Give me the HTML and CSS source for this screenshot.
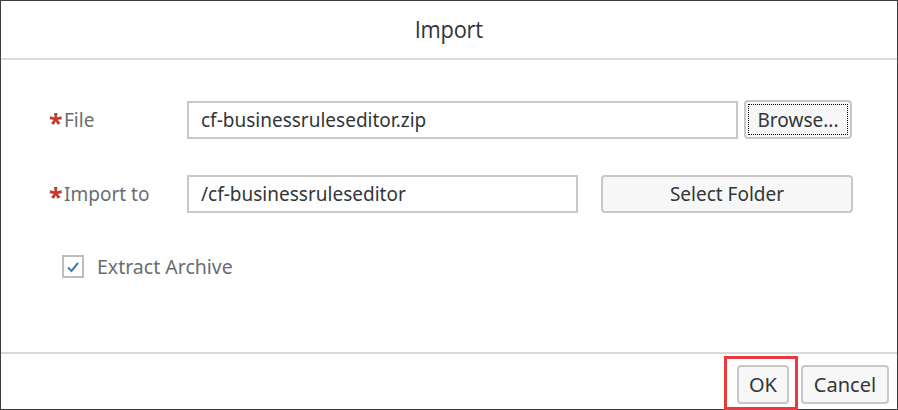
FILE: index.html
```html
<!DOCTYPE html>
<html lang="en">
<head>
<meta charset="utf-8">
<title>Import</title>
<link rel="stylesheet" href="styles.css">
</head>
<body>
<div class="dialog">
  <header class="dialog-header">
    <h1 class="title">Import</h1>
  </header>
  <main class="dialog-content">
    <div class="form-row">
      <label class="label"><span class="req">*</span>File</label>
      <div class="field field-file">cf-businessruleseditor.zip</div>
      <button class="btn btn-browse"><span class="focus-ring">Browse...</span></button>
    </div>
    <div class="form-row row-second">
      <label class="label"><span class="req">*</span>Import to</label>
      <div class="field field-folder">/cf-businessruleseditor</div>
      <button class="btn btn-folder">Select Folder</button>
    </div>
    <div class="check-row">
      <span class="checkbox">
        <svg width="14" height="12" viewBox="0 0 14 12"><path d="M2 6.5 L5.5 10 L12 2" fill="none" stroke="#427cac" stroke-width="2"/></svg>
      </span>
      <span class="check-label">Extract Archive</span>
    </div>
  </main>
  <footer class="dialog-footer">
    <div class="ok-wrap">
      <button class="btn btn-ok">OK</button>
      <span class="highlight"></span>
    </div>
    <button class="btn btn-cancel">Cancel</button>
  </footer>
</div>
</body>
</html>
```
FILE: styles.css
```css
* { box-sizing: border-box; }
html, body { margin: 0; padding: 0; background: #fff; }
body {
  font-family: "Noto Sans", "Open Sans", sans-serif;
  color: #32363a;
}
.dialog {
  width: 898px;
  height: 410px;
  border: 1px solid #3e3e3e;
  display: flex;
  flex-direction: column;
  background: #fff;
}
.dialog-header {
  height: 59px;
  border-bottom: 2px solid #dcdcdc;
  display: flex;
  align-items: center;
  justify-content: center;
  flex-shrink: 0;
}
.title {
  margin: 0;
  font-family: "Open Sans", sans-serif;
  font-weight: 400;
  font-size: 23px;
  letter-spacing: -0.3px;
  color: #32363a;
  transform: scaleX(0.95);
  padding-bottom: 2px;
}
.dialog-content {
  flex: 1;
  padding: 40px 0 0 48px;
  border-bottom: 2px solid #d9d9d9;
}
.form-row {
  display: flex;
  align-items: center;
  height: 39px;
}
.row-second { margin-top: 35px; }
.label {
  width: 138px;
  flex-shrink: 0;
  font-size: 19px;
  color: #6a6d70;
  display: flex;
  align-items: center;
}
.req {
  color: #c0392b;
  font-size: 25px;
  font-weight: 700;
  width: 15px;
  line-height: 1;
  margin-top: 5px;
}
.field {
  height: 38px;
  border: 2px solid #c8c8c8;
  font-size: 19px;
  color: #32363a;
  padding: 0 12px;
  display: flex;
  align-items: center;
}
.field-file { width: 551px; }
.field-folder { width: 391px; }
.btn {
  font-family: "Noto Sans", "Open Sans", sans-serif;
  font-size: 19px;
  color: #32363a;
  background: #f6f7f6;
  border: 2px solid #c8c8c8;
  border-radius: 4px;
  height: 39px;
  padding: 0;
  display: flex;
  align-items: center;
  justify-content: center;
}
.btn-browse {
  width: 108px;
  margin-left: 6px;
  padding: 2px;
}
.focus-ring {
  width: 100%;
  height: 100%;
  border: 1px dotted #000;
  display: flex;
  align-items: center;
  justify-content: center;
}
.btn-folder {
  width: 252px;
  margin-left: 23px;
  height: 38px;
}
.check-row {
  display: flex;
  align-items: center;
  margin-top: 40px;
  margin-left: 13px;
}
.checkbox {
  width: 22px;
  height: 23px;
  border: 2px solid #bdbdbd;
  display: flex;
  align-items: center;
  justify-content: center;
}
.check-label {
  margin-left: 13px;
  font-size: 19.5px;
  color: #6a6d70;
}
.dialog-footer {
  height: 55px;
  flex-shrink: 0;
  display: flex;
  justify-content: flex-end;
  align-items: flex-start;
  padding: 11px 8px 0 0;
  gap: 12px;
}
.ok-wrap { position: relative; }
.btn-ok { width: 52px; height: 39px; font-size: 20px; }
.btn-cancel { width: 88px; height: 39px; font-size: 20px; }
.highlight {
  position: absolute;
  left: -13px;
  top: -9px;
  width: 74px;
  height: 54px;
  border: 3px solid #e8393f;
  pointer-events: none;
}
```
